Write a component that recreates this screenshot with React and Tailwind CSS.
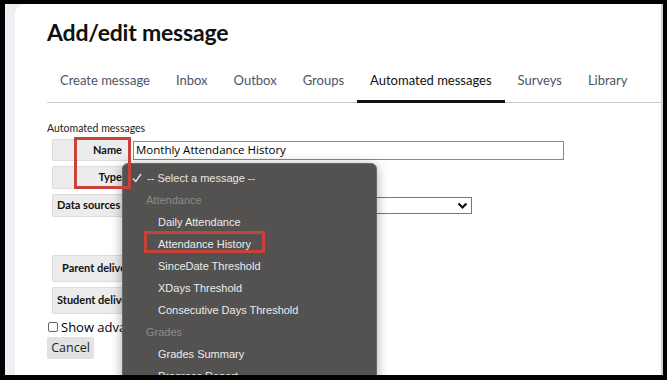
import React from 'react'

const tabs = ["Create message", "Inbox", "Outbox", "Groups", "Automated messages", "Surveys", "Library"]

const menu = [
  { kind: "selected", text: "-- Select a message --" },
  { kind: "header", text: "Attendance" },
  { kind: "item", text: "Daily Attendance" },
  { kind: "item", text: "Attendance History" },
  { kind: "item", text: "SinceDate Threshold" },
  { kind: "item", text: "XDays Threshold" },
  { kind: "item", text: "Consecutive Days Threshold" },
  { kind: "header", text: "Grades" },
  { kind: "item", text: "Grades Summary" },
  { kind: "item", text: "Progress Report" },
]

function LabelCell({ children, className }) {
  return (
    <div className={"bg-[#ececec] border border-[#dcdcdc] rounded-[2px] flex items-center text-[11px] font-bold text-[#111] whitespace-nowrap overflow-hidden " + className}>
      {children}
    </div>
  )
}

export default function App() {
  return (
    <div className="w-[667px] h-[380px] bg-black pt-[4px] pl-[5px] pr-[4px] pb-[5px] font-['Lato',sans-serif]">
      <div className="h-full bg-[#eef0f4] pl-[10px] flex">
        <div className="flex-1 bg-white rounded-tl-[10px] border-r-2 border-[#d0d0d0] relative overflow-hidden pl-[32px] pt-[14px]">
          <h1 className="text-[23px] font-bold text-[#111] leading-[28px] tracking-[-0.2px]">Add/edit message</h1>

          {/* Tabs */}
          <div className="flex mt-[20px] border-b border-[#c8c8c8] h-[37px]">
            {tabs.map((t) => (
              <div
                key={t}
                className={
                  "px-[13px] flex items-center pb-[7px] text-[13px] " +
                  (t === "Automated messages"
                    ? "text-[#111] border-b-[3px] border-[#111] -mb-[1px] pt-[3px]"
                    : "text-[#4a5568]")
                }
              >
                {t}
              </div>
            ))}
          </div>

          <div className="text-[10.5px] text-[#222] mt-[18px] leading-[14px]">Automated messages</div>

          {/* Form */}
          <div className="ml-[5px] mt-[4px] flex flex-col font-['Open_Sans',sans-serif]">
            <div className="flex items-center gap-[2px] h-[22px]">
              <LabelCell className="w-[79px] h-[22px] justify-end pr-[8px] font-['Lato',sans-serif]">Name</LabelCell>
              <div className="w-[431px] h-[19px] border border-[#888] flex items-center px-[2px] text-[11.5px] text-black">
                Monthly Attendance History
              </div>
            </div>
            <div className="flex items-center gap-[2px] h-[23px] mt-[5px]">
              <LabelCell className="w-[79px] h-[23px] justify-end pr-[8px] font-['Lato',sans-serif]">Type</LabelCell>
            </div>
            <div className="flex items-center gap-[2px] h-[23px] mt-[5px]">
              <LabelCell className="w-[79px] h-[23px] pl-[4px] font-['Lato',sans-serif]">Data sources</LabelCell>
              <div className="w-[339px] h-[17px] border border-[#777] flex items-center justify-end pr-[3px]">
                <svg width="11" height="8" viewBox="0 0 11 8" fill="none" stroke="#111" strokeWidth="2.2">
                  <path d="M1.5 1.5 L5.5 5.5 L9.5 1.5" />
                </svg>
              </div>
            </div>
            <div className="mt-[38px]">
              <LabelCell className="w-[160px] h-[27px] pl-[9px] font-['Lato',sans-serif]">Parent delivery method</LabelCell>
            </div>
            <div className="mt-[5px]">
              <LabelCell className="w-[160px] h-[27px] pl-[4px] font-['Lato',sans-serif]">Student delivery method</LabelCell>
            </div>
            <label className="flex items-center gap-[3px] mt-[5px] -ml-[4px] text-[13px] leading-[16px] text-black">
              <span className="w-[10px] h-[10px] border border-[#666] rounded-[2px] bg-white"></span>
              Show advanced options
            </label>
            <button className="self-start -ml-[5px] mt-[2px] w-[47px] h-[22px] bg-[#e2e2e2] rounded-[2px] text-[12.5px] text-[#222]">
              Cancel
            </button>
          </div>

          {/* Open select dropdown */}
          <div className="absolute left-[107px] top-[159px] w-[255px] h-[240px] bg-[#535250] border border-[#6b6a68] rounded-t-[6px] shadow-[0_2px_12px_rgba(0,0,0,0.35)] pt-[3px] font-['Liberation_Sans',sans-serif] text-[11px]">
            {menu.map((m) => (
              <div key={m.text} className="h-[22px] flex items-center">
                {m.kind === "selected" && (
                  <>
                    <svg className="ml-[9px] mr-[5px]" width="10" height="10" viewBox="0 0 10 10" fill="none" stroke="#e6e6e6" strokeWidth="1.4">
                      <path d="M1 5.5 L3.8 8.5 L9 1" />
                    </svg>
                    <span className="text-[#e6e6e6]">{m.text}</span>
                  </>
                )}
                {m.kind === "header" && <span className="pl-[23px] text-[#8c8b89]">{m.text}</span>}
                {m.kind === "item" && <span className="pl-[35px] text-[#ececec]">{m.text}</span>}
              </div>
            ))}
          </div>

          {/* Annotations */}
          <div className="absolute left-[59px] top-[133px] w-[57px] h-[52px] border-[3px] border-[#c8423a]"></div>
          <div className="absolute left-[129px] top-[227px] w-[121px] h-[22px] border-[3px] border-[#c8423a]"></div>
        </div>
      </div>
    </div>
  )
}
